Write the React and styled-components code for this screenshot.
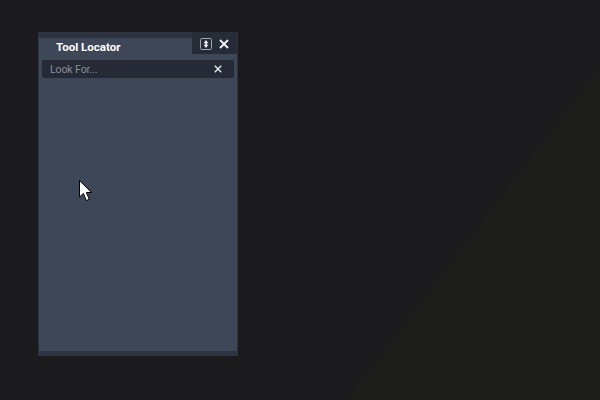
import React from 'react';
import styled, { createGlobalStyle } from 'styled-components';

const GlobalStyle = createGlobalStyle`
  html, body {
    margin: 0;
    padding: 0;
    background: #1b1b1c;
  }
`;

const Desktop = styled.div`
  position: relative;
  width: 600px;
  height: 400px;
  overflow: hidden;
  padding: 32px 0 0 38px;
  box-sizing: border-box;
  background: linear-gradient(127.2deg, #1b1b1d 0%, #1b1b1d 71.6%, #1c1c1a 72%, #1c1c1a 100%);
`;

const Panel = styled.div`
  width: 200px;
  height: 324px;
  box-sizing: border-box;
  display: flex;
  flex-direction: column;
  background: #3e4758;
  border-left: 1px solid #2e3342;
  border-right: 1px solid #2e3342;
  font-family: Roboto, 'Liberation Sans', sans-serif;
`;

const TitleBar = styled.div`
  height: 22px;
  display: flex;
  background: #2e3342;
`;

const Tab = styled.div`
  width: 153px;
  margin-top: 6px;
  padding: 2px 0 0 17px;
  box-sizing: border-box;
  display: flex;
  align-items: center;
  background: #3e4758;
  color: #ffffff;
  font-size: 11.5px;
  font-weight: 700;
  line-height: 14px;
  white-space: nowrap;
`;

const Controls = styled.div`
  flex: 1;
  display: flex;
  align-items: center;
  gap: 7px;
  padding: 2px 0 0 8px;
  background: #262b38;
`;

const IconButton = styled.span`
  display: flex;
  width: ${(p) => p.$size}px;
  height: ${(p) => p.$size}px;
`;

const SearchWrap = styled.div`
  padding: 6px 3px 0;
`;

const SearchBox = styled.div`
  height: 18px;
  display: flex;
  align-items: center;
  justify-content: space-between;
  padding: 0 12px 0 8px;
  border-radius: 2px;
  background: #252a36;
`;

const Placeholder = styled.span`
  color: #8b8e94;
  font-size: 10.5px;
  letter-spacing: -0.1px;
`;

const Body = styled.div`
  flex: 1;
`;

const Footer = styled.div`
  height: 5px;
  background: #2e3342;
`;

const Cursor = styled.svg`
  position: absolute;
  left: 78px;
  top: 179px;
`;

const CloseIcon = ({ size, color }) => (
  <svg width={size} height={size} viewBox="0 0 10 10">
    <path d="M1 1L9 9M9 1L1 9" stroke={color} strokeWidth="1.8" fill="none" />
  </svg>
);

export default function App() {
  return (
    <>
      <GlobalStyle />
      <Desktop>
        <Panel>
          <TitleBar>
            <Tab>Tool Locator</Tab>
            <Controls>
              <IconButton $size={12}>
                <svg width="12" height="12" viewBox="0 0 12 12">
                  <rect x="0.5" y="0.5" width="11" height="11" rx="1" fill="none" stroke="#a4a7af" />
                  <path d="M6 2L8.4 5.2H3.6ZM6 10L3.6 6.8H8.4Z" fill="#f0f1f2" />
                  <rect x="5.2" y="4.5" width="1.6" height="3" fill="#f0f1f2" />
                </svg>
              </IconButton>
              <IconButton $size={10}>
                <CloseIcon size={10} color="#f2f3f4" />
              </IconButton>
            </Controls>
          </TitleBar>
          <SearchWrap>
            <SearchBox>
              <Placeholder>Look For...</Placeholder>
              <IconButton $size={8}>
                <CloseIcon size={8} color="#e6e7e9" />
              </IconButton>
            </SearchBox>
          </SearchWrap>
          <Body />
          <Footer />
        </Panel>
        <Cursor width="15" height="24" viewBox="0 0 15 24">
          <path d="M1.5 1.5V18L5.4 14.4L8.3 21.6L11.3 20.3L8.4 13.5H13.6Z" fill="#ffffff" stroke="#000000" strokeWidth="1" />
        </Cursor>
      </Desktop>
    </>
  );
}
